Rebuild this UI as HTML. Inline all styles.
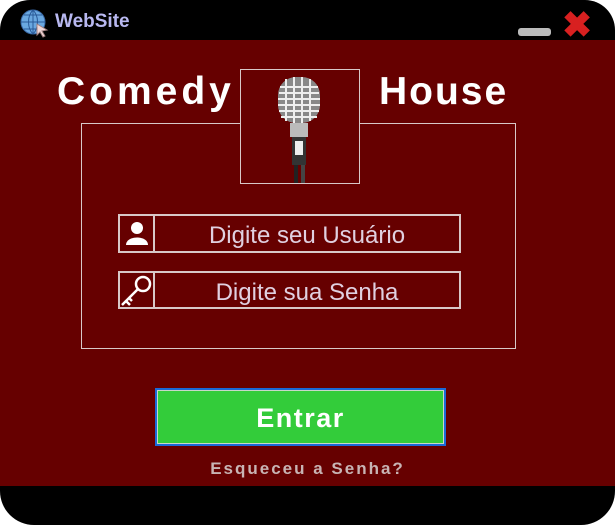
<!DOCTYPE html><html><head><style>
body{margin:0;background:#fff;width:615px;height:525px;overflow:hidden;font-family:"Liberation Sans",sans-serif;position:relative}
.win{position:absolute;left:0;top:0;width:615px;height:525px;background:#000;border-radius:30px 30px 34px 34px;overflow:hidden}
.body{position:absolute;left:0;top:40px;width:615px;height:446px;background:#660000}
.a{position:absolute}
.t{color:#fff;font-weight:bold;font-size:39px;letter-spacing:4px}
.box{border:2px solid #d8c8c8;box-sizing:border-box}
.inp{color:#e0d0e0;font-size:24px;text-align:center;line-height:40px}
</style></head><body><div class="win">
<svg class="a" style="left:19px;top:8px" width="30" height="30" viewBox="0 0 30 30"><circle cx="14" cy="14" r="12" fill="#6aa8e0" stroke="#3a6aa8"/><path d="M2 14H26M14 2V26M5 7H23M5 21H23M14 2C8 8 8 20 14 26M14 2C20 8 20 20 14 26" stroke="#2a5a98" fill="none" stroke-width="1"/><path d="M18 16L28 22L23 23L26 28L24 29L21 24L18 27Z" fill="#f0d8d8" stroke="#a08080"/></svg>
<div class="a" style="left:55px;top:11px;color:#b8b8f0;font-weight:bold;font-size:19px">WebSite</div>
<div class="a" style="left:518px;top:28px;width:33px;height:8px;background:#bbb;border-radius:3px"></div>
<div class="a" style="left:562px;top:7px;color:#d82020;font-size:36px;font-weight:bold;line-height:36px">✖</div>
<div class="body"></div>
<div class="a box" style="left:81px;top:123px;width:435px;height:226px;border-width:1px"></div>
<div class="a t" style="left:57px;top:70px">Comedy</div>
<div class="a t" style="left:379px;top:70px;letter-spacing:2px">House</div>
<div class="a box" style="left:240px;top:69px;width:120px;height:115px;border-width:1px;background:#660000"></div>
<svg class="a" style="left:274px;top:75px" width="50" height="108" viewBox="0 0 50 108"><rect x="4" y="2" width="42" height="46" rx="18" fill="#888"/><path d="M6 12H44M5 18H45M4 24H46M4 30H46M5 36H45M7 42H43M12 4V46M20 2V48M28 2V48M36 4V46" stroke="#eee" stroke-width="2"/><rect x="16" y="48" width="18" height="14" fill="#bbb"/><rect x="18" y="62" width="14" height="28" fill="#333"/><rect x="21" y="66" width="8" height="14" fill="#eee"/><rect x="20" y="90" width="4" height="18" fill="#222"/><rect x="27" y="90" width="4" height="18" fill="#444"/></svg>
<div class="a box" style="left:118px;top:214px;width:37px;height:39px"></div>
<svg class="a" style="left:125px;top:220px" width="24" height="26" viewBox="0 0 24 26"><circle cx="12" cy="8" r="6" fill="#fff"/><path d="M1 25C1 15 23 15 23 25Z" fill="#fff"/></svg>
<div class="a box inp" style="left:153px;top:214px;width:308px;height:39px">Digite seu Usuário</div>
<div class="a box" style="left:118px;top:271px;width:37px;height:38px"></div>
<svg class="a" style="left:120px;top:273px" width="34" height="34" viewBox="0 0 34 34"><circle cx="23" cy="11" r="7" fill="none" stroke="#fff" stroke-width="2.5"/><path d="M18 16L2 32M6 28L10 32M9 25L12 28" stroke="#fff" stroke-width="2.5"/></svg>
<div class="a box inp" style="left:153px;top:271px;width:308px;height:38px">Digite sua Senha</div>
<div class="a" style="left:155px;top:388px;width:291px;height:58px;box-sizing:border-box;border:2px solid #1a6ad8;background:#33cc3a;box-shadow:inset 0 0 0 1px #c8d8c8;color:#fff;font-weight:bold;font-size:27px;text-align:center;line-height:56px;letter-spacing:1.5px">Entrar</div>
<div class="a" style="left:0;width:615px;top:459px;text-align:center;color:#c8b4b4;font-weight:bold;font-size:17px;letter-spacing:2px">Esqueceu a Senha?</div>
</div></body></html>
